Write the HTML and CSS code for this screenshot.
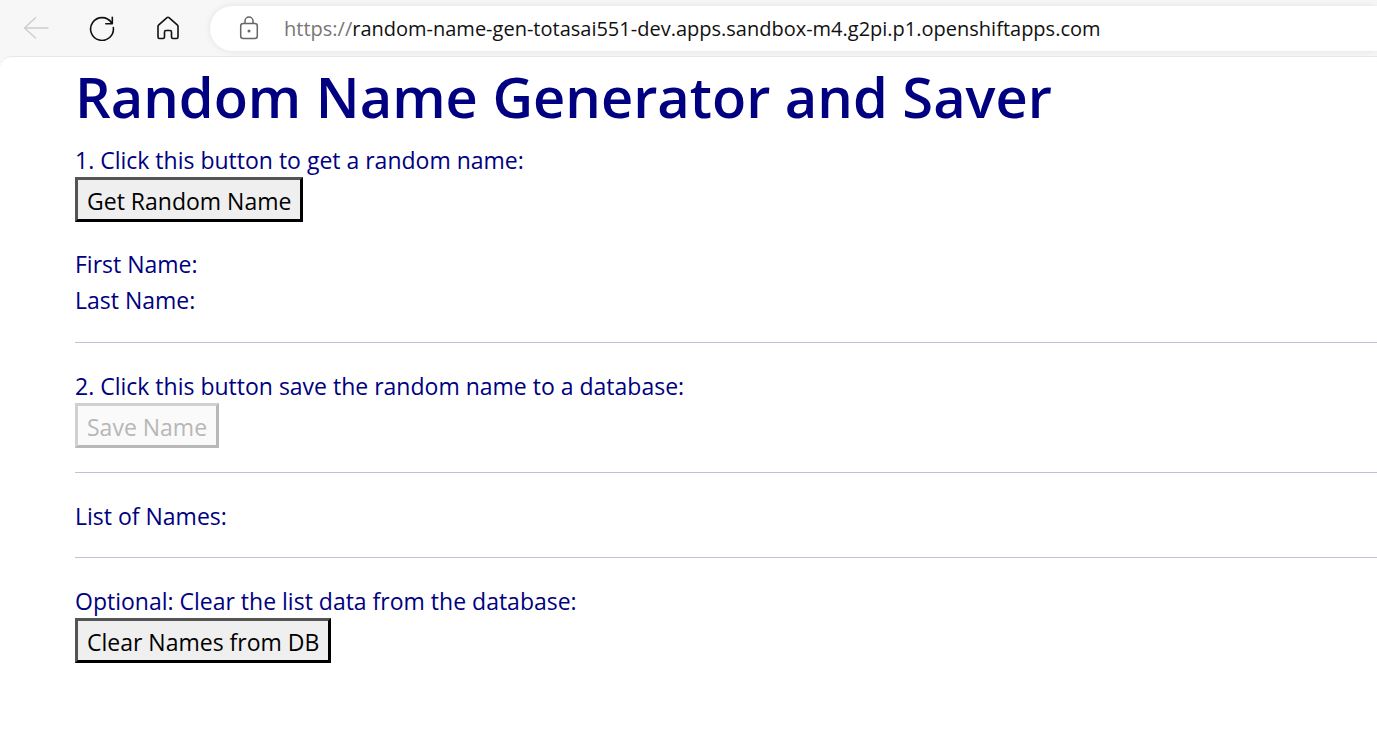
FILE: index.html
```
<!DOCTYPE html>
<html lang="en">
<head>
<meta charset="utf-8">
<title>Random Name Generator and Saver</title>
<link rel="stylesheet" href="styles.css">
</head>
<body>
<header class="toolbar">
  <nav class="nav-buttons">
    <button class="icon-button" type="button" aria-label="Back" disabled>
      <svg width="26" height="26" viewBox="0 0 26 26" fill="none" stroke="#cdcdcd" stroke-width="1.4" stroke-linecap="round" stroke-linejoin="round"><path d="M25 13H1.500M12.500 2.700L1.500 13L12.500 23"/></svg>
    </button>
    <button class="icon-button" type="button" aria-label="Refresh">
      <svg width="26" height="26" viewBox="0 0 26 26" fill="none" stroke="#111" stroke-width="1.6" stroke-linecap="round" stroke-linejoin="round"><path d="M24.300 12.500A11.400 11.400 0 1 1 22.500 7.700M23.300 2.300V8.800H16.800"/></svg>
    </button>
    <button class="icon-button" type="button" aria-label="Home">
      <svg width="26" height="26" viewBox="0 0 26 26" fill="none" stroke="#111" stroke-width="1.6" stroke-linecap="round" stroke-linejoin="round"><path d="M3 11.500Q3 10.500 3.800 9.800L12 2.700Q13 1.900 14 2.700L22.200 9.800Q23 10.500 23 11.500V22Q23 23.500 21.500 23.500H18Q16.500 23.500 16.500 22V17Q16.500 15.500 15 15.500H11Q9.500 15.500 9.500 17V22Q9.500 23.500 8 23.500H4.500Q3 23.500 3 22Z"/></svg>
    </button>
  </nav>
  <div class="address">
    <svg class="lock" width="20" height="26" viewBox="0 0 20 26" fill="none" stroke="#666" stroke-width="1.500"><rect x="1.700" y="8.500" width="16.600" height="15" rx="2.500"/><path d="M6 8.500V6A4 4 0 0 1 14 6V8.500"/><circle cx="10" cy="16" r="1.500" fill="#666" stroke="none"/></svg>
    <span class="url"><span class="scheme">https://</span>random-name-gen-totasai551-dev.apps.sandbox-m4.g2pi.p1.openshiftapps.com</span>
  </div>
</header>
<main class="page">
  <h1 class="title">Random Name Generator and Saver</h1>
  <section class="group">
    <p class="step">1. Click this button to get a random name:</p>
    <button class="action" type="button">Get Random Name</button>
    <div class="names">
      <div class="line">First Name:</div>
      <div class="line">Last Name:</div>
    </div>
  </section>
  <hr class="rule">
  <section class="group">
    <p class="step">2. Click this button save the random name to a database:</p>
    <button class="action" type="button" disabled>Save Name</button>
  </section>
  <hr class="rule">
  <section class="group">
    <div class="step">List of Names:</div>
  </section>
  <hr class="rule">
  <section class="group">
    <p class="step">Optional: Clear the list data from the database:</p>
    <button class="action" type="button">Clear Names from DB</button>
  </section>
</main>
</body>
</html>
```
FILE: styles.css
```
* {
  box-sizing: border-box;
}

body {
  margin: 0;
  min-height: 100vh;
  background: #f7f7f7;
  color: #000080;
  font-family: "Segoe UI", "Open Sans", "Noto Sans", sans-serif;
  font-size: 23px;
}

.toolbar {
  display: flex;
  align-items: center;
  height: 56px;
  padding-left: 23px;
}

.nav-buttons {
  display: flex;
  gap: 40px;
}

.icon-button {
  display: flex;
  padding: 0;
  border: 0;
  background: none;
}

.address {
  display: flex;
  flex: 1;
  align-items: center;
  height: 45px;
  margin-left: 29px;
  padding-left: 29px;
  gap: 25px;
  border-radius: 23px 0 0 23px;
  background: #fff;
  box-shadow: 0 0 7px #e2e2e2;
}

.lock {
  flex: none;
}

.url {
  color: #111;
  font-size: 20px;
  white-space: nowrap;
}

.scheme {
  color: #767676;
}

.page {
  min-height: calc(100vh - 56px);
  padding: 3px 0 24px 75px;
  border-top: 1px solid #e6e6e6;
  border-top-left-radius: 12px;
  background: #fff;
}

.title {
  margin: 0 0 11px;
  font-size: 56px;
  font-weight: 600;
  line-height: 72px;
}

.group {
  display: flex;
  flex-direction: column;
  align-items: flex-start;
}

.step {
  margin: 0;
  line-height: 34px;
}

.action {
  height: 45px;
  padding: 2px 9px 0;
  border: 3px outset #000;
  border-radius: 0;
  background: #efefef;
  color: #000;
  font: inherit;
}

.action:disabled {
  border-color: #d0d0d0 #b8b8b8 #b8b8b8 #d0d0d0;
  border-style: solid;
  background: #fafafa;
  color: #b7b7b7;
}

.names {
  margin-top: 24px;
  line-height: 36px;
}

.rule {
  height: 1px;
  margin: 24px 0 26px;
  border: 0;
  background: #bfbfdf;
}
```
